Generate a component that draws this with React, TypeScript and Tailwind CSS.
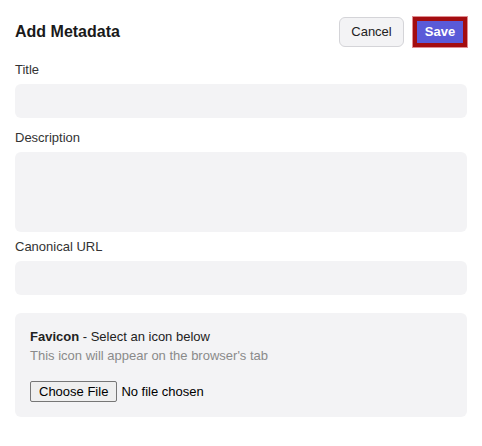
export default function App() {
  return (
    <div className="min-h-screen bg-white px-[15px] pt-[16px] font-['Liberation_Sans',Arial,sans-serif] text-[13px] text-[#222]">
      <div className="flex h-[32px] items-center justify-between">
        <h2 className="text-[16px] font-bold text-[#1a1a1a]">Add Metadata</h2>
        <div className="flex items-center gap-[9px]">
          <button className="h-[30px] w-[65px] rounded-md border border-[#d4d4d8] bg-[#f3f3f5] text-[13px] text-[#222]">
            Cancel
          </button>
          <button className="h-[30px] w-[54px] border-4 border-[#a30d10] bg-[#5a5ad8] text-[13px] font-bold text-white ring-1 ring-[#e08d91]">
            Save
          </button>
        </div>
      </div>

      <label className="mt-[14px] block leading-[15px] text-[#333]">Title</label>
      <input className="mt-[7px] block h-[34px] w-full rounded-md bg-[#f3f3f5] px-3 outline-none" />

      <label className="mt-[12px] block leading-[15px] text-[#333]">Description</label>
      <textarea className="mt-[7px] block h-[80px] w-full resize-none rounded-md bg-[#f3f3f5] px-3 py-2 outline-none" />

      <label className="mt-[7px] block leading-[15px] text-[#333]">Canonical URL</label>
      <input className="mt-[7px] block h-[34px] w-full rounded-md bg-[#f3f3f5] px-3 outline-none" />

      <div className="mt-[18px] rounded-md bg-[#f3f3f5] px-[15px] pb-[15px] pt-[14px] leading-[19px]">
        <p className="text-[#222]">
          <span className="font-bold">Favicon</span> - Select an icon below
        </p>
        <p className="text-[#8a8a8a]">This icon will appear on the browser's tab</p>
        <input
          type="file"
          className="mt-[16px] block text-[13px] leading-[19px] text-black file:mr-[4px] file:h-[21px] file:rounded-[2px] file:border file:border-[#767676] file:bg-[#efefef] file:px-[8px] file:text-[13px] file:text-black"
        />
      </div>
    </div>
  );
}
